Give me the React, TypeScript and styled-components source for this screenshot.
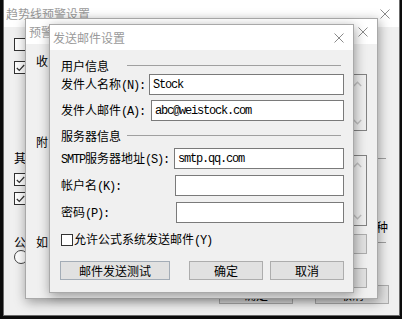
import React from "react";
import styled, { createGlobalStyle } from "styled-components";

const GlobalStyle = createGlobalStyle`
  html, body { margin: 0; padding: 0; background: #0c0c0c; }
  body {
    font-family: "Noto Sans CJK SC", "Liberation Sans", sans-serif;
    font-size: 12px;
    color: #000;
  }
`;

const Desktop = styled.div`
  position: relative;
  width: 402px;
  height: 319px;
  overflow: hidden;
  background: #0c0c0c;
`;

const Win = styled.div<{ $x: number; $y: number; $w: number; $h: number; $shadow?: boolean }>`
  position: absolute;
  left: ${(p) => p.$x}px;
  top: ${(p) => p.$y}px;
  width: ${(p) => p.$w}px;
  height: ${(p) => p.$h}px;
  box-sizing: border-box;
  display: flex;
  flex-direction: column;
  background: #f0f0f0;
  border: 1px solid ${(p) => (p.$shadow ? "#a9a9a9" : "#6b6b6b")};
  box-shadow: ${(p) => (p.$shadow ? "1px 3px 11px rgba(0,0,0,0.38)" : "none")};
`;

const TitleBar = styled.div<{ $h: number; $pl: number }>`
  flex: none;
  height: ${(p) => p.$h}px;
  background: #fff;
  display: flex;
  align-items: center;
  justify-content: space-between;
  padding: 0 9px 0 ${(p) => p.$pl}px;
  color: #9a9a9a;
  font-size: 12px;
  line-height: 14px;
  white-space: nowrap;
  overflow: hidden;
`;

const CloseIcon = () => (
  <svg width="10" height="10" viewBox="0 0 10 10">
    <path d="M0.5 0.5 L9.5 9.5 M9.5 0.5 L0.5 9.5" stroke="#8a8a8a" strokeWidth="1" fill="none" />
  </svg>
);

const Mono = styled.span`
  font-family: "Liberation Mono", "DejaVu Sans Mono", monospace;
  font-size: 12px;
  letter-spacing: -1.2px;
`;

const Txt = ({ t }: { t: string }) => (
  <>
    {t
      .split(/([\x20-\x7E]+)/)
      .filter(Boolean)
      .map((part, i) =>
        /^[\x20-\x7E]+$/.test(part) ? <Mono key={i}>{part}</Mono> : <React.Fragment key={i}>{part}</React.Fragment>
      )}
  </>
);

/* ---------- shared controls ---------- */

const Button = styled.div<{ $w: number; $h?: number; $mt?: number; $blue?: boolean }>`
  flex: none;
  width: ${(p) => p.$w}px;
  height: ${(p) => p.$h ?? 19}px;
  margin-top: ${(p) => p.$mt ?? 0}px;
  box-sizing: border-box;
  border: 1px solid ${(p) => (p.$blue ? "#a3acb6" : "#adadad")};
  background: #e1e1e1;
  display: flex;
  align-items: center;
  justify-content: center;
  font-size: 12px;
  line-height: 14px;
  white-space: nowrap;
`;

const Box = styled.div<{ $size: number; $mt?: number }>`
  flex: none;
  width: ${(p) => p.$size}px;
  height: ${(p) => p.$size}px;
  margin-top: ${(p) => p.$mt ?? 0}px;
  box-sizing: border-box;
  border: 1px solid #333;
  background: #fff;
  display: flex;
  align-items: center;
  justify-content: center;
`;

const RadioCircle = styled(Box)`
  border-radius: 50%;
  border-color: #444;
`;

const CheckMark = () => (
  <svg width="9" height="8" viewBox="0 0 9 8">
    <path d="M0.8 4 L3.3 6.5 L8.2 1" stroke="#333" strokeWidth="1.2" fill="none" />
  </svg>
);

const Glyph = styled.div<{ $mt?: number }>`
  margin-top: ${(p) => p.$mt ?? 0}px;
  font-size: 12px;
  line-height: 14px;
  white-space: nowrap;
`;

const HLine = styled.div<{ $mt?: number; $w: number }>`
  width: ${(p) => p.$w}px;
  margin-top: ${(p) => p.$mt ?? 0}px;
  margin-right: 2px;
  border-top: 1px solid #a0a0a0;
`;

/* ---------- outer window ---------- */

const OuterBody = styled.div`
  flex: 1;
  display: flex;
  flex-direction: column;
  padding: 11px 10px 11px 10px;
  min-height: 0;
`;

const OuterMain = styled.div`
  flex: 1;
  display: flex;
  justify-content: space-between;
`;

const Column = styled.div`
  display: flex;
  flex-direction: column;
  align-items: flex-start;
`;

const RightColumn = styled(Column)`
  align-items: flex-end;
  margin-top: -11px;
  margin-right: 1px;
`;

const ButtonRow = styled.div<{ $gap: number }>`
  display: flex;
  justify-content: flex-end;
  gap: ${(p) => p.$gap}px;
`;

/* ---------- middle window ---------- */

const MidBody = styled.div`
  flex: 1;
  display: flex;
  justify-content: space-between;
  padding: 10px 9px 0 10px;
`;

const ListBox = styled.div<{ $h: number; $mt: number }>`
  width: 240px;
  height: ${(p) => p.$h}px;
  margin-top: ${(p) => p.$mt}px;
  box-sizing: border-box;
  border: 1px solid #828282;
  background: #f0f0f0;
  display: flex;
  justify-content: flex-end;
`;

const ScrollTrack = styled.div`
  width: 17px;
  display: flex;
  flex-direction: column;
  justify-content: space-between;
  align-items: center;
`;

const ArrowCell = styled.div`
  height: 17px;
  display: flex;
  align-items: center;
  justify-content: center;
`;

const Chevron = ({ up }: { up?: boolean }) => (
  <svg width="9" height="6" viewBox="0 0 9 6">
    <path
      d={up ? "M0.8 5 L4.5 1.2 L8.2 5" : "M0.8 1 L4.5 4.8 L8.2 1"}
      stroke="#c2c2c2"
      strokeWidth="1.4"
      fill="none"
    />
  </svg>
);

const MidControls = styled(Column)`
  align-items: flex-end;
  margin-right: 1px;
`;

/* ---------- front dialog ---------- */

const DialogBody = styled.div`
  flex: 1;
  display: flex;
  flex-direction: column;
  padding: 9px 9px 12px 11px;
`;

const GroupHeader = styled.div<{ $mt?: number }>`
  display: grid;
  grid-template-columns: 66px 1fr;
  align-items: center;
  height: 14px;
  margin-top: ${(p) => p.$mt ?? 0}px;
  margin-right: 3px;
  font-size: 12px;
  line-height: 14px;
`;

const GroupLine = styled.div`
  border-top: 1px solid #a0a0a0;
  margin-top: -1px;
`;

const FieldRow = styled.div<{ $lw: number; $mt: number }>`
  display: grid;
  grid-template-columns: ${(p) => p.$lw}px 1fr;
  align-items: center;
  margin-top: ${(p) => p.$mt}px;
`;

const Label = styled.div`
  font-size: 12px;
  line-height: 14px;
  white-space: nowrap;
`;

const Input = styled.div`
  height: 21px;
  box-sizing: border-box;
  border: 1px solid #7a7a7a;
  background: #fff;
  padding: 0 3px;
  display: flex;
  align-items: center;
  white-space: nowrap;
  overflow: hidden;
`;

const CheckRow = styled.div`
  display: flex;
  align-items: center;
  gap: 1px;
  height: 14px;
  margin-top: 10px;
`;

const DialogButtons = styled.div`
  display: flex;
  align-items: center;
  margin-top: 14px;
  margin-left: -1px;
`;

const ButtonGroup = styled.div`
  margin-left: auto;
  display: flex;
  gap: 7px;
`;

const ScrollList = ({ h, mt }: { h: number; mt: number }) => (
  <ListBox $h={h} $mt={mt}>
    <ScrollTrack>
      <ArrowCell>
        <Chevron up />
      </ArrowCell>
      <ArrowCell>
        <Chevron />
      </ArrowCell>
    </ScrollTrack>
  </ListBox>
);

export default function App() {
  return (
    <>
      <GlobalStyle />
      <Desktop>
        {/* outer window */}
        <Win $x={3} $y={-1} $w={397} $h={317}>
          <TitleBar $h={27} $pl={2}>
            <span>趋势线预警设置</span>
            <CloseIcon />
          </TitleBar>
          <OuterBody>
            <OuterMain>
              <Column>
                <Box $size={13} />
                <Box $size={13} $mt={10}>
                  <CheckMark />
                </Box>
                <Glyph $mt={77}>其</Glyph>
                <Box $size={13} $mt={8}>
                  <CheckMark />
                </Box>
                <Box $size={13} $mt={6}>
                  <CheckMark />
                </Box>
                <Glyph $mt={30}>公</Glyph>
                <RadioCircle $size={14} $mt={1} />
              </Column>
              <RightColumn>
                <HLine $w={160} $mt={131} />
                <Glyph $mt={61}>种</Glyph>
                <HLine $w={160} $mt={8} />
              </RightColumn>
            </OuterMain>
            <ButtonRow $gap={22}>
              <Button $w={74}>确定</Button>
              <Button $w={74}>取消</Button>
            </ButtonRow>
          </OuterBody>
        </Win>

        {/* middle window */}
        <Win $x={25} $y={18} $w={353} $h={281} $shadow>
          <TitleBar $h={25} $pl={3}>
            <span>预警</span>
            <CloseIcon />
          </TitleBar>
          <MidBody>
            <Column>
              <Glyph>收</Glyph>
              <Glyph $mt={67}>附</Glyph>
              <Glyph $mt={86}>如</Glyph>
            </Column>
            <MidControls>
              <ScrollList h={57} mt={20} />
              <ScrollList h={71} mt={24} />
              <Button $w={74} $h={20} $mt={8} />
              <Button $w={74} $h={20} $mt={14} />
            </MidControls>
          </MidBody>
        </Win>

        {/* front dialog */}
        <Win $x={49} $y={24} $w={305} $h={269} $shadow>
          <TitleBar $h={25} $pl={3}>
            <span>发送邮件设置</span>
            <CloseIcon />
          </TitleBar>
          <DialogBody>
            <GroupHeader>
              <span>用户信息</span>
              <GroupLine />
            </GroupHeader>
            <FieldRow $lw={88} $mt={1}>
              <Label>
                <Txt t="发件人名称(N):" />
              </Label>
              <Input>
                <Mono>Stock</Mono>
              </Input>
            </FieldRow>
            <FieldRow $lw={90} $mt={5}>
              <Label>
                <Txt t="发件人邮件(A):" />
              </Label>
              <Input>
                <Mono>abc@weistock.com</Mono>
              </Input>
            </FieldRow>

            <GroupHeader $mt={8}>
              <span>服务器信息</span>
              <GroupLine />
            </GroupHeader>
            <FieldRow $lw={113} $mt={5}>
              <Label>
                <Txt t="SMTP服务器地址(S):" />
              </Label>
              <Input>
                <Mono>smtp.qq.com</Mono>
              </Input>
            </FieldRow>
            <FieldRow $lw={114} $mt={6}>
              <Label>
                <Txt t="帐户名(K):" />
              </Label>
              <Input />
            </FieldRow>
            <FieldRow $lw={115} $mt={6}>
              <Label>
                <Txt t="密码(P):" />
              </Label>
              <Input />
            </FieldRow>

            <CheckRow>
              <Box $size={12} />
              <Label>
                <Txt t="允许公式系统发送邮件(Y)" />
              </Label>
            </CheckRow>

            <DialogButtons>
              <Button $w={110} $blue>
                邮件发送测试
              </Button>
              <ButtonGroup>
                <Button $w={74}>确定</Button>
                <Button $w={74}>取消</Button>
              </ButtonGroup>
            </DialogButtons>
          </DialogBody>
        </Win>
      </Desktop>
    </>
  );
}
